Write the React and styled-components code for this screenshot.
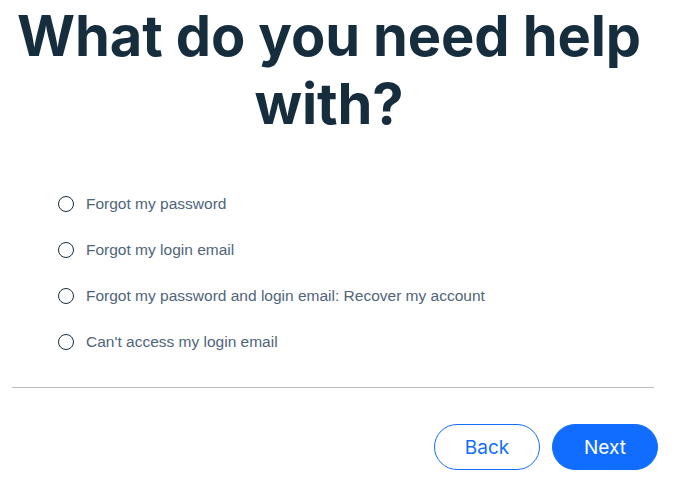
import React, { useState } from 'react';
import styled, { createGlobalStyle } from 'styled-components';

const GlobalStyle = createGlobalStyle`
  html, body {
    margin: 0;
    padding: 0;
    background: #ffffff;
  }
`;

const Page = styled.div`
  width: 680px;
  display: flex;
  flex-direction: column;
`;

const Title = styled.h1`
  margin: 2px 22px 0 0;
  font-family: Inter, "Liberation Sans", sans-serif;
  font-weight: 700;
  font-size: 56px;
  line-height: 68px;
  letter-spacing: -0.1px;
  color: #162d3d;
  text-align: center;
`;

const Options = styled.div`
  display: flex;
  flex-direction: column;
  margin-top: 43px;
  padding-left: 58px;
`;

const Option = styled.label`
  display: flex;
  align-items: center;
  gap: 12px;
  height: 46px;
  cursor: pointer;
  font-family: "Liberation Sans", Arial, sans-serif;
  font-size: 15.5px;
  color: #4f657a;
`;

const Circle = styled.span`
  box-sizing: border-box;
  width: 16px;
  height: 16px;
  border-radius: 50%;
  border: 1px solid #162d3d;
  display: flex;
  align-items: center;
  justify-content: center;

  &::after {
    content: '';
    width: 8px;
    height: 8px;
    border-radius: 50%;
    background: ${(p) => (p.$checked ? '#116dff' : 'transparent')};
  }
`;

const Divider = styled.hr`
  margin: 22px 26px 0 12px;
  border: none;
  border-top: 1px solid #bebebe;
`;

const Actions = styled.div`
  display: flex;
  justify-content: flex-end;
  gap: 12px;
  margin-top: 36px;
  padding-right: 22px;
`;

const Button = styled.button`
  box-sizing: border-box;
  width: 106px;
  height: 46px;
  border-radius: 23px;
  border: 1px solid #116dff;
  background: ${(p) => (p.$primary ? '#116dff' : '#ffffff')};
  color: ${(p) => (p.$primary ? '#ffffff' : '#116dff')};
  font-family: Inter, "Liberation Sans", sans-serif;
  font-size: 19px;
  font-weight: 400;
  cursor: pointer;
`;

const options = [
  'Forgot my password',
  'Forgot my login email',
  'Forgot my password and login email: Recover my account',
  "Can't access my login email",
];

export default function App() {
  const [selected, setSelected] = useState(null);

  return (
    <Page>
      <GlobalStyle />
      <Title>
        What do you need help
        <br />
        with?
      </Title>
      <Options>
        {options.map((text, i) => (
          <Option key={text} onClick={() => setSelected(i)}>
            <Circle $checked={selected === i} />
            {text}
          </Option>
        ))}
      </Options>
      <Divider />
      <Actions>
        <Button>Back</Button>
        <Button $primary>Next</Button>
      </Actions>
    </Page>
  );
}
